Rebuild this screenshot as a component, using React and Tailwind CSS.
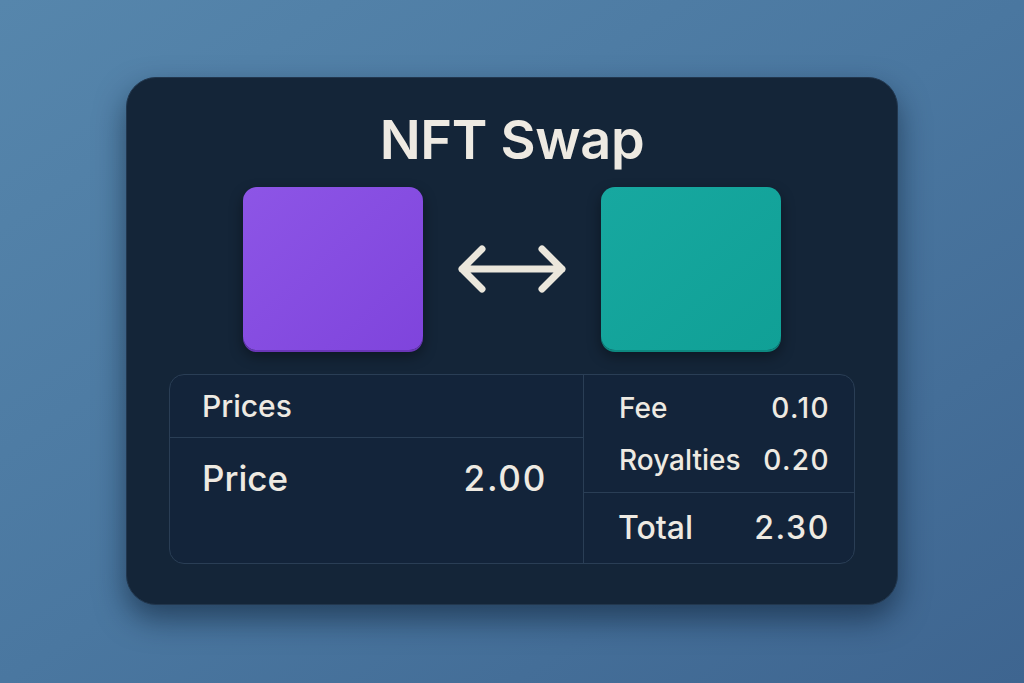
import React from 'react';

const cream = 'text-[#eeeae2]';

const SwapArrow = () => (
  <svg width="112" height="56" viewBox="0 0 112 56" fill="none">
    <path
      d="M6 28H106M26 8L6 28l20 20M86 8l20 20-20 20"
      stroke="#ebe7dc"
      strokeWidth="7"
      strokeLinecap="round"
      strokeLinejoin="round"
    />
  </svg>
);

const Row = ({ label, value, className = '' }) => (
  <div className={`flex items-center justify-between ${className}`}>
    <span>{label}</span>
    <span className="tracking-[0.05em]">{value}</span>
  </div>
);

export default function App() {
  return (
    <div
      className="w-full h-[683px] flex items-center justify-center bg-gradient-to-br from-[#5686ac] via-[#4a77a0] to-[#3e6590]"
      style={{ fontFamily: 'Inter, "Noto Sans", sans-serif' }}
    >
      <div className="w-[772px] h-[528px] mb-[1px] rounded-[30px] bg-[#142538] border border-[#22374e] shadow-[0_14px_30px_rgba(10,25,45,0.55)] flex flex-col items-center pt-[35px]">
        <h1 className={`text-[54px] leading-none font-semibold tracking-[-0.3px] ${cream}`}>NFT Swap</h1>

        <div className="flex items-center mt-[20px]">
          <div className="w-[180px] h-[163px] rounded-[14px] bg-gradient-to-br from-[#8d55e6] to-[#7f44dc] shadow-[0_2px_0_#6a36b8,0_6px_14px_rgba(0,0,0,0.4)]" />
          <div className="w-[178px] flex items-center justify-center">
            <SwapArrow />
          </div>
          <div className="w-[180px] h-[163px] rounded-[14px] bg-gradient-to-br from-[#17a8a0] to-[#10a096] shadow-[0_2px_0_#0d8880,0_6px_14px_rgba(0,0,0,0.4)]" />
        </div>

        <div className={`mt-[24px] w-[686px] h-[190px] rounded-[15px] border border-[#2a3e55] bg-[#13243a] flex font-medium ${cream}`}>
          <div className="w-[414px] border-r border-[#2a3e55] flex flex-col">
            <div className="h-[63px] flex items-center pl-[32px] border-b border-[#2a3e55] text-[30px]">
              Prices
            </div>
            <Row label="Price" value="2.00" className="h-[80px] pl-[32px] pr-[36px] text-[35px]" />
          </div>
          <div className="flex-1 flex flex-col">
            <div className="h-[118px] flex flex-col justify-center gap-[10px] pl-[35px] pr-[24px] border-b border-[#2a3e55] text-[28px]">
              <Row label="Fee" value="0.10" />
              <Row label="Royalties" value="0.20" />
            </div>
            <Row label="Total" value="2.30" className="flex-1 pl-[34px] pr-[24px] text-[32px]" />
          </div>
        </div>
      </div>
    </div>
  );
}
